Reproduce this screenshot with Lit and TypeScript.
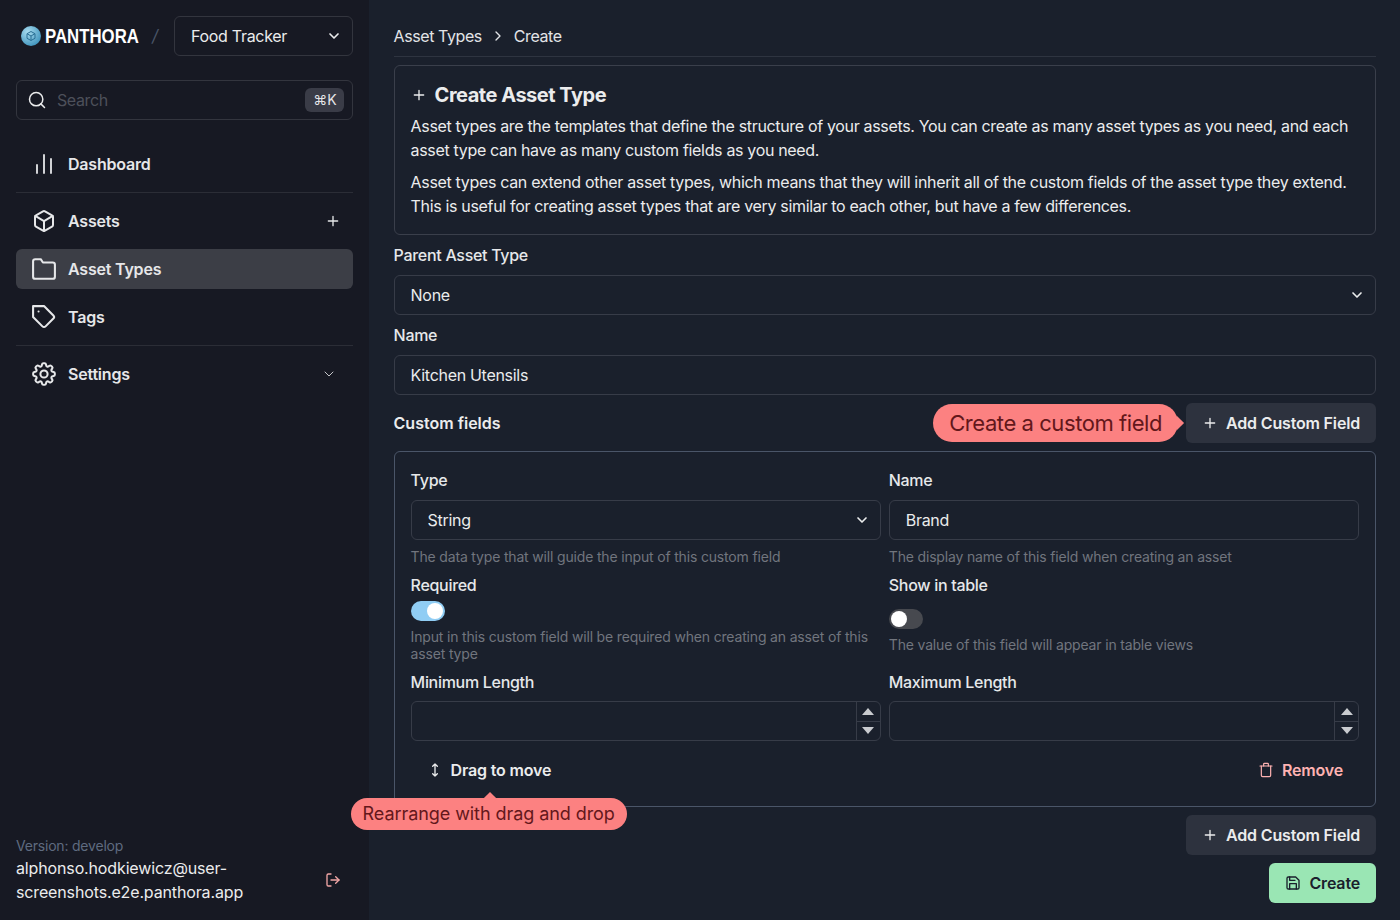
import { LitElement, css, html, svg } from "lit";
import { customElement } from "lit/decorators.js";

const icon = (size: number, body: unknown, width = 2, view = "0 0 24 24") => html`<svg
  class="icon"
  width=${size}
  height=${size}
  viewBox=${view}
  fill="none"
  stroke="currentColor"
  stroke-width=${width}
  stroke-linecap="round"
  stroke-linejoin="round"
>
  ${body}
</svg>`;

const plus = svg`<path d="M12 5v14M5 12h14" />`;
const chevronDown = svg`<polyline points="6 9 12 15 18 9" />`;
const chevronRight = svg`<polyline points="9 6 15 12 9 18" />`;
const bars = svg`<path d="M5 21v-8M12 21V3M19 21V7" />`;
const box = svg`<path d="M21 16V8a2 2 0 0 0-1-1.73l-7-4a2 2 0 0 0-2 0l-7 4A2 2 0 0 0 3 8v8a2 2 0 0 0 1 1.73l7 4a2 2 0 0 0 2 0l7-4A2 2 0 0 0 21 16z" /><polyline points="3.27 6.96 12 12.01 20.73 6.96" /><path d="M12 22.08V12" />`;
const folder = svg`<path d="M22 19a2 2 0 0 1-2 2H4a2 2 0 0 1-2-2V5a2 2 0 0 1 2-2h5l2 3h9a2 2 0 0 1 2 2z" />`;
const tag = svg`<path d="M20.59 13.41l-7.17 7.17a2 2 0 0 1-2.83 0L2 12V2h10l8.59 8.59a2 2 0 0 1 0 2.82z" /><path d="M7 7h.01" />`;
const gear = svg`<path d="M10.343 3.94c.09-.542.56-.94 1.11-.94h1.093c.55 0 1.02.398 1.11.94l.149.894c.07.424.384.764.78.93.398.164.855.142 1.205-.108l.737-.527a1.125 1.125 0 011.45.12l.773.774c.39.389.44 1.002.12 1.45l-.527.737c-.25.35-.272.806-.107 1.204.165.397.505.71.93.78l.893.15c.543.09.94.56.94 1.109v1.094c0 .55-.397 1.02-.94 1.11l-.893.149c-.425.07-.765.383-.93.78-.165.398-.143.854.107 1.204l.527.738c.32.447.269 1.06-.12 1.45l-.774.773a1.125 1.125 0 01-1.449.12l-.738-.527c-.35-.25-.806-.272-1.203-.107-.397.165-.71.505-.781.929l-.149.894c-.09.542-.56.94-1.11.94h-1.094c-.55 0-1.019-.398-1.11-.94l-.148-.894c-.071-.424-.384-.764-.781-.93-.398-.164-.854-.142-1.204.108l-.738.527c-.447.32-1.06.269-1.45-.12l-.773-.774a1.125 1.125 0 01-.12-1.45l.527-.737c.25-.35.273-.806.108-1.204-.165-.397-.505-.71-.93-.78l-.894-.15c-.542-.09-.94-.56-.94-1.109v-1.094c0-.55.398-1.02.94-1.11l.894-.149c.424-.07.765-.383.93-.78.165-.398.143-.854-.107-1.204l-.527-.738a1.125 1.125 0 01.12-1.45l.773-.773a1.125 1.125 0 011.45-.12l.737.527c.35.25.807.272 1.204.107.397-.165.71-.505.78-.929l.15-.894z" /><circle cx="12" cy="12" r="3" />`;
const search = svg`<circle cx="11" cy="11" r="8" /><path d="M21 21l-4.35-4.35" />`;
const logout = svg`<path d="M9 21H5a2 2 0 0 1-2-2V5a2 2 0 0 1 2-2h4" /><polyline points="16 17 21 12 16 7" /><path d="M21 12H9" />`;
const trash = svg`<path d="M3 6h18" /><path d="M5 6v14a2 2 0 0 0 2 2h10a2 2 0 0 0 2-2V6" /><path d="M8.5 6V3a1 1 0 0 1 1-1h5a1 1 0 0 1 1 1v3" />`;
const save = svg`<path d="M19 21H5a2 2 0 0 1-2-2V5a2 2 0 0 1 2-2h11l5 5v11a2 2 0 0 1-2 2z" /><polyline points="17 21 17 13 7 13 7 21" /><polyline points="7 3 7 8 15 8" />`;
const upDown = svg`<path d="M12 3v18M8.5 6.5L12 3l3.5 3.5M8.5 17.5L12 21l3.5-3.5" />`;

@customElement("app-root")
export class AppRoot extends LitElement {
  static styles = css`
    :host {
      display: flex;
      height: 920px;
      overflow: hidden;
      background: #1a202c;
      color: #ebeced;
      font-family: Inter, "Liberation Sans", sans-serif;
      font-size: 16px;
      line-height: 24px;
      letter-spacing: -0.3px;
    }

    .icon {
      display: block;
      flex: none;
    }

    /* ---- sidebar ---- */
    .sidebar {
      width: 369.4px;
      flex: none;
      box-sizing: border-box;
      padding: 16px 16px 16px 16px;
      background: #171923;
      display: flex;
      flex-direction: column;
    }

    .brand {
      display: flex;
      align-items: center;
      height: 40px;
    }

    .logo {
      display: flex;
      align-items: center;
      width: 136px;
      padding-left: 5px;
      box-sizing: border-box;
      flex: none;
    }

    .logo-ball {
      width: 20px;
      height: 20px;
      flex: none;
      display: block;
    }

    .logo-text {
      margin-left: 4px;
      font-family: "Liberation Sans", sans-serif;
      font-size: 21px;
      font-weight: 700;
      letter-spacing: 0;
      color: #fff;
      transform: scaleX(0.8);
      transform-origin: left center;
    }

    .slash {
      color: #4a5568;
      font-size: 17px;
      font-style: italic;
      width: 22px;
      flex: none;
    }

    .brand .control {
      flex: 1;
      min-width: 0;
    }

    .brand select {
      padding-left: 15.5px;
      letter-spacing: -0.42px;
    }

    .search {
      position: relative;
      display: flex;
      align-items: center;
      height: 40px;
      margin-top: 24px;
      box-sizing: border-box;
      border: 1px solid #33353e;
      border-radius: 6px;
      padding: 0 8px 0 9.5px;
      gap: 10.5px;
    }

    .search input {
      flex: 1;
      min-width: 0;
      background: none;
      border: 0;
      outline: 0;
      padding: 0;
      font: inherit;
      color: inherit;
      letter-spacing: -0.4px;
    }

    .search input::placeholder {
      color: #4d505a;
      opacity: 1;
    }

    .kbd {
      flex: none;
      width: 39px;
      height: 24px;
      border-radius: 6px;
      background: #3a3c47;
      color: #e4e5e7;
      font-size: 14px;
      line-height: 24px;
      text-align: center;
      letter-spacing: 0;
    }

    .nav {
      margin-top: 24px;
      display: flex;
      flex-direction: column;
      gap: 8px;
    }

    .nav-item {
      display: flex;
      align-items: center;
      height: 40px;
      padding: 0 12px 0 16px;
      border-radius: 6px;
      gap: 12px;
      font-weight: 600;
      color: #e6e7e9;
      letter-spacing: -0.2px;
    }

    .nav-item.active {
      background: #3c3e46;
    }

    .nav-item .label {
      flex: 1;
    }

    .nav-item .chev {
      margin-right: 4px;
      color: #c5c6c9;
    }

    .rule {
      height: 1px;
      background: #2b2d36;
    }

    .footer {
      margin-top: auto;
    }

    .version {
      color: #5f6b80;
      font-size: 14px;
      line-height: 18px;
      padding-bottom: 1px;
      letter-spacing: -0.2px;
    }

    .user {
      display: flex;
      align-items: center;
      justify-content: space-between;
      letter-spacing: -0.14px;
    }

    .email {
      width: 260px;
    }

    .logout {
      width: 40px;
      height: 40px;
      display: flex;
      align-items: center;
      justify-content: center;
      color: #f2a6a6;
    }

    /* ---- main column ---- */
    .main {
      flex: 1;
      min-width: 0;
      padding: 16px 24px 0 24.2px;
      display: flex;
      flex-direction: column;
    }

    .crumbs {
      display: flex;
      align-items: center;
      gap: 8px;
      height: 41px;
      box-sizing: border-box;
      border-bottom: 1px solid #2e3440;
      color: #e2e4e7;
      letter-spacing: -0.42px;
    }

    .intro {
      margin-top: 8px;
      border: 1px solid #3a3f4b;
      border-radius: 6px;
      padding: 16px;
    }

    .intro-title {
      display: flex;
      align-items: center;
      gap: 8px;
      font-size: 20px;
      font-weight: 700;
      line-height: 26px;
      margin-bottom: 6px;
      color: #ebeced;
      letter-spacing: -0.48px;
    }

    .intro p {
      margin: 0;
      letter-spacing: -0.33px;
    }

    .intro p + p {
      margin-top: 8px;
    }

    .field-label {
      display: block;
      margin-top: 8px;
      margin-bottom: 8px;
      font-weight: 500;
      color: #e6e8ea;
    }

    .control {
      position: relative;
      display: flex;
      align-items: center;
      height: 40px;
      box-sizing: border-box;
      border: 1px solid #373c48;
      border-radius: 6px;
    }

    .sidebar .control {
      border-color: #33353e;
    }

    .control input,
    .control select {
      appearance: none;
      flex: 1;
      min-width: 0;
      height: 100%;
      background: none;
      border: 0;
      outline: 0;
      padding: 0 16px;
      font: inherit;
      color: inherit;
      letter-spacing: -0.3px;
    }

    .control .caret {
      position: absolute;
      right: 10px;
      top: 11px;
      pointer-events: none;
    }

    .stepper {
      width: 24px;
      height: 100%;
      flex: none;
      box-sizing: border-box;
      display: flex;
      flex-direction: column;
      border-left: 1px solid #373c48;
    }

    .stepper span {
      flex: 1;
      display: flex;
      align-items: center;
      justify-content: center;
    }

    .stepper span + span {
      border-top: 1px solid #373c48;
    }

    .section-head {
      position: relative;
      display: flex;
      align-items: center;
      justify-content: space-between;
      margin-top: 8px;
    }

    .section-title {
      font-weight: 600;
      letter-spacing: 0;
    }

    .btn {
      display: inline-flex;
      align-items: center;
      height: 40px;
      box-sizing: border-box;
      padding: 0 16px;
      gap: 8px;
      border-radius: 6px;
      font-weight: 600;
      color: #ebeced;
      letter-spacing: -0.17px;
    }

    .btn.solid {
      background: #2d323e;
    }

    .btn.danger {
      color: #feb2b2;
    }

    .btn.save {
      background: #9ae6b4;
      color: #1a202c;
    }

    .field-box {
      position: relative;
      margin-top: 8px;
      border: 1px solid #4a5568;
      border-radius: 6px;
      padding: 16px;
    }

    .grid {
      display: grid;
      grid-template-columns: 1fr 1fr;
      column-gap: 8px;
    }

    .grid .field-label.first {
      margin-top: 0;
    }

    .help {
      margin-top: 8px;
      font-size: 14px;
      line-height: 17px;
      color: #71757e;
      letter-spacing: -0.17px;
    }

    .toggle + .help {
      margin-top: 7px;
    }

    .toggle {
      width: 34px;
      height: 20px;
      box-sizing: border-box;
      padding: 2px;
      border-radius: 10px;
      background: #47494f;
    }

    .toggle.on {
      background: #90cdf4;
      padding-left: 16px;
    }

    .toggle i {
      display: block;
      width: 16px;
      height: 16px;
      border-radius: 50%;
      background: #fff;
    }

    .tight {
      margin-bottom: 4px;
    }

    .loose {
      margin-bottom: 12px;
    }

    .grid .compact {
      margin-bottom: 7px;
    }

    .box-actions {
      display: flex;
      justify-content: space-between;
      margin-top: 9px;
    }

    .footer-actions {
      display: flex;
      flex-direction: column;
      align-items: flex-end;
      gap: 8px;
      margin-top: 8px;
    }

    /* ---- tour hints, these lie over the form ---- */
    .hint {
      position: absolute;
      background: #fc8181;
      color: #63171b;
      white-space: nowrap;
      z-index: 2;
    }

    .hint::after {
      content: "";
      position: absolute;
      width: 10px;
      height: 10px;
      background: #fc8181;
      transform: rotate(45deg);
    }

    .hint-create {
      right: 198px;
      top: 1px;
      height: 38px;
      padding: 0 16px;
      border-radius: 19px;
      font-size: 22px;
      line-height: 38px;
      letter-spacing: -0.43px;
    }

    .hint-create::after {
      right: -4px;
      top: 14px;
    }

    .hint-drag {
      left: -44px;
      bottom: -24px;
      height: 32px;
      padding: 0 12px;
      border-radius: 16px;
      font-size: 18px;
      line-height: 32px;
      letter-spacing: -0.07px;
    }

    .hint-drag::after {
      left: 134px;
      top: -4px;
    }
  `;

  select(value: string) {
    return html`<div class="control">
      <select><option>${value}</option></select>
      <span class="caret">${icon(16, chevronDown, 2.5)}</span>
    </div>`;
  }

  numberBox() {
    return html`<div class="control">
      <input type="text" />
      <div class="stepper">
        <span><svg width="12" height="7" viewBox="0 0 12 7"><path d="M6 0l6 7H0z" fill="#c9cbcf" /></svg></span>
        <span><svg width="12" height="7" viewBox="0 0 12 7"><path d="M0 0h12L6 7z" fill="#c9cbcf" /></svg></span>
      </div>
    </div>`;
  }

  renderSidebar() {
    return html`<aside class="sidebar">
      <div class="brand">
        <div class="logo">
          <svg class="logo-ball" viewBox="0 0 20 20">
            <defs>
              <radialGradient id="ball" cx="35%" cy="30%" r="75%">
                <stop offset="0" stop-color="#a9dcef" />
                <stop offset="1" stop-color="#3f94bd" />
              </radialGradient>
            </defs>
            <circle cx="10" cy="10" r="10" fill="url(#ball)" />
            <path d="M10 5.5l4 2.2v4.6l-4 2.2-4-2.2V7.7zM6 7.7l4 2.3 4-2.3M10 10v4.5" fill="none" stroke="#2a6f94" stroke-width="1" />
          </svg>
          <span class="logo-text">PANTHORA</span>
        </div>
        <span class="slash">/</span>
        ${this.select("Food Tracker")}
      </div>

      <div class="search">
        ${icon(20, search, 1.8)}
        <input placeholder="Search" />
        <span class="kbd">⌘K</span>
      </div>

      <nav class="nav">
        <div class="nav-item">${icon(24, bars, 1.8)}<span class="label">Dashboard</span></div>
        <div class="rule"></div>
        <div class="nav-item">
          ${icon(24, box)}<span class="label">Assets</span>${icon(16, plus)}
        </div>
        <div class="nav-item active">
          ${icon(24, folder, 1.9, "1 1 22 22")}<span class="label">Asset Types</span>
        </div>
        <div class="nav-item">${icon(24, tag, 1.9, "1 1 22 22")}<span class="label">Tags</span></div>
        <div class="rule"></div>
        <div class="nav-item">
          ${icon(24, gear, 1.7, "2 2 20 20")}<span class="label">Settings</span>
          <span class="chev">${icon(16, chevronDown, 1.5)}</span>
        </div>
      </nav>

      <div class="footer">
        <div class="version">Version: develop</div>
        <div class="user">
          <div class="email">alphonso.hodkiewicz@user-screenshots.e2e.panthora.app</div>
          <div class="logout">${icon(16, logout)}</div>
        </div>
      </div>
    </aside>`;
  }

  renderMain() {
    return html`<main class="main">
      <div class="crumbs">
        <span>Asset Types</span>${icon(16, chevronRight)}<span>Create</span>
      </div>

      <section class="intro">
        <div class="intro-title">${icon(16, plus)}<span>Create Asset Type</span></div>
        <p>
          Asset types are the templates that define the structure of your assets. You can create as
          many asset types as you need, and each asset type can have as many custom fields as you
          need.
        </p>
        <p>
          Asset types can extend other asset types, which means that they will inherit all of the
          custom fields of the asset type they extend. This is useful for creating asset types that
          are very similar to each other, but have a few differences.
        </p>
      </section>

      <label class="field-label">Parent Asset Type</label>
      ${this.select("None")}
      <label class="field-label">Name</label>
      <div class="control"><input value="Kitchen Utensils" /></div>

      <div class="section-head">
        <span class="section-title">Custom fields</span>
        <span class="hint hint-create">Create a custom field</span>
        <span class="btn solid">${icon(16, plus)}Add Custom Field</span>
      </div>

      <section class="field-box">
        <div class="grid">
          <div>
            <label class="field-label first">Type</label>
            ${this.select("String")}
            <div class="help">The data type that will guide the input of this custom field</div>
          </div>
          <div>
            <label class="field-label first">Name</label>
            <div class="control"><input value="Brand" /></div>
            <div class="help">The display name of this field when creating an asset</div>
          </div>
          <div>
            <label class="field-label tight">Required</label>
            <div class="toggle on"><i></i></div>
            <div class="help">
              Input in this custom field will be required when creating an asset of this asset type
            </div>
          </div>
          <div>
            <label class="field-label loose">Show in table</label>
            <div class="toggle"><i></i></div>
            <div class="help">The value of this field will appear in table views</div>
          </div>
          <div>
            <label class="field-label compact">Minimum Length</label>
            ${this.numberBox()}
          </div>
          <div>
            <label class="field-label compact">Maximum Length</label>
            ${this.numberBox()}
          </div>
        </div>
        <div class="box-actions">
          <span class="btn">${icon(16, upDown)}Drag to move</span>
          <span class="btn danger">${icon(16, trash, 1.8)}Remove</span>
        </div>
        <span class="hint hint-drag">Rearrange with drag and drop</span>
      </section>

      <div class="footer-actions">
        <span class="btn solid">${icon(16, plus)}Add Custom Field</span>
        <span class="btn save">${icon(16, save)}Create</span>
      </div>
    </main>`;
  }

  render() {
    return html`${this.renderSidebar()}${this.renderMain()}`;
  }
}
